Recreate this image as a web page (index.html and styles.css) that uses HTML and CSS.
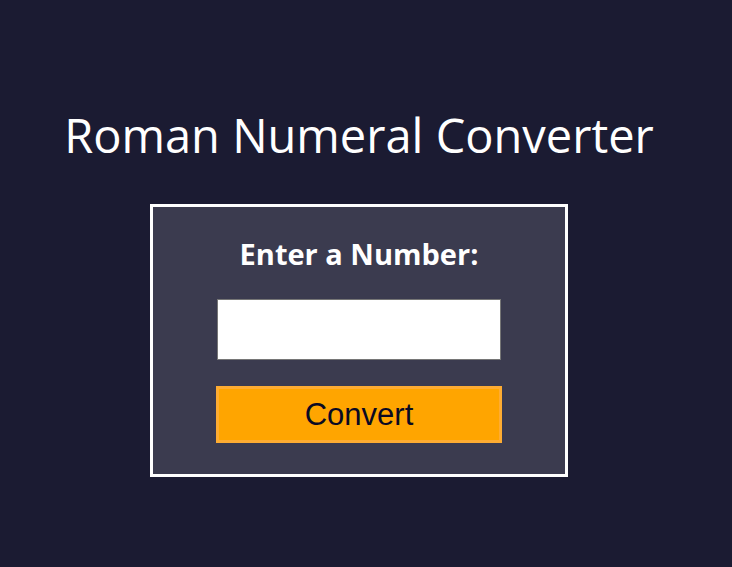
FILE: index.html
```html
<!DOCTYPE html>
<html lang="en">
  <head>
    <meta charset="UTF-8" />
    <meta name="viewport" content="width=device-width, initial-scale=1.0" />
    <title>Roman Numeral Converter</title>
    <link rel="stylesheet" href="styles.css">
  </head>
  <body>
    <main class="page">
      <h1 class="title">Roman Numeral Converter</h1>
      <form id="form" class="converter">
        <label for="number" class="converter-label">Enter a Number:</label>
        <input type="number" id="number" class="number-input" />
        <button type="submit" id="convert-btn" class="convert-btn">Convert</button>
      </form>
    </main>
  </body>
</html>
```

FILE: styles.css
```css
* {
  box-sizing: border-box;
}

body {
  margin: 0;
  font-family: "Open Sans", "Noto Sans", sans-serif;
  background-color: #1b1b32;
  color: #ffffff;
}

.page {
  width: 718px;
  display: flex;
  flex-direction: column;
  align-items: center;
  padding-top: 103px;
}

.title {
  margin: 0 0 37px;
  font-size: 47px;
  font-weight: 400;
  line-height: 64px;
}

/* Converter card */
.converter {
  width: 418px;
  height: 273px;
  display: flex;
  flex-direction: column;
  align-items: center;
  background-color: #3b3b4f;
  border: 3px solid #ffffff;
  padding-top: 29px;
}

.converter-label {
  font-size: 29px;
  font-weight: 700;
  line-height: 36px;
  margin-bottom: 27px;
}

.number-input {
  width: 284px;
  height: 61px;
  border: 1px solid #767676;
  background-color: #ffffff;
  margin-bottom: 26px;
}

.convert-btn {
  width: 286px;
  height: 57px;
  background-color: #ffa500;
  border: 3px solid #feac32;
  font-family: "Liberation Sans", Arial, sans-serif;
  font-size: 31px;
  color: #0a0a23;
}
```
